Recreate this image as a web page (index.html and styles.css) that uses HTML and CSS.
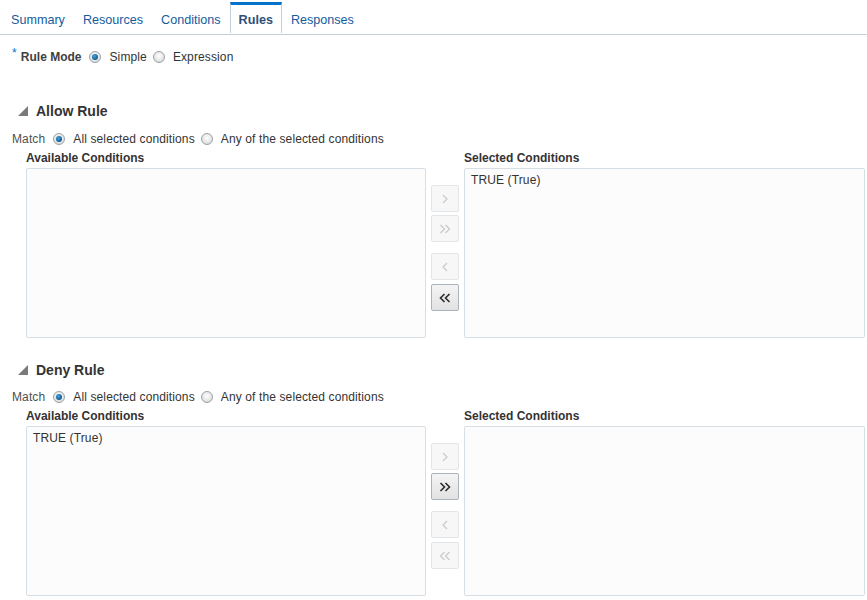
FILE: index.html
```html
<!DOCTYPE html>
<html>
<head>
<meta charset="utf-8">
<link rel="stylesheet" href="styles.css">
</head>
<body>
<div class="tabs">
  <div class="tab">Summary</div>
  <div class="tab">Resources</div>
  <div class="tab">Conditions</div>
  <div class="tab active">Rules</div>
  <div class="tab">Responses</div>
</div>

<div class="mode-row">
  <span class="req">*</span>
  <span class="mode-label">Rule Mode</span>
  <span class="radio on"></span><span class="opt">Simple</span>
  <span class="radio"></span><span class="opt">Expression</span>
</div>

<section class="rule allow">
  <h2 class="rule-head"><svg class="tri" width="10" height="10" viewBox="0 0 10 10"><polygon points="10,0 10,10 0,10" fill="#7a7a7a"/></svg>Allow Rule</h2>
  <div class="match-row">
    <span class="match-label">Match</span>
    <span class="radio on"></span><span class="opt">All selected conditions</span>
    <span class="radio"></span><span class="opt">Any of the selected conditions</span>
  </div>
  <div class="shuttle">
    <div class="col">
      <div class="col-label">Available Conditions</div>
      <div class="list"></div>
    </div>
    <div class="btns">
      <div class="btn dis"><svg width="10" height="10" viewBox="0 0 10 10"><polyline points="3,1 7,5 3,9" fill="none" stroke="currentColor" stroke-width="1.2"/></svg></div>
      <div class="btn dis"><svg width="12" height="10" viewBox="0 0 12 10"><polyline points="1.5,1 5.5,5 1.5,9" fill="none" stroke="currentColor" stroke-width="1.2"/><polyline points="6.5,1 10.5,5 6.5,9" fill="none" stroke="currentColor" stroke-width="1.2"/></svg></div>
      <div class="btn dis grp"><svg width="10" height="10" viewBox="0 0 10 10"><polyline points="7,1 3,5 7,9" fill="none" stroke="currentColor" stroke-width="1.2"/></svg></div>
      <div class="btn last"><svg width="12" height="10" viewBox="0 0 12 10"><polyline points="5.5,1 1.5,5 5.5,9" fill="none" stroke="currentColor" stroke-width="1.6"/><polyline points="10.5,1 6.5,5 10.5,9" fill="none" stroke="currentColor" stroke-width="1.6"/></svg></div>
    </div>
    <div class="col">
      <div class="col-label">Selected Conditions</div>
      <div class="list"><div class="item">TRUE (True)</div></div>
    </div>
  </div>
</section>

<section class="rule deny">
  <h2 class="rule-head"><svg class="tri" width="10" height="10" viewBox="0 0 10 10"><polygon points="10,0 10,10 0,10" fill="#7a7a7a"/></svg>Deny Rule</h2>
  <div class="match-row">
    <span class="match-label">Match</span>
    <span class="radio on"></span><span class="opt">All selected conditions</span>
    <span class="radio"></span><span class="opt">Any of the selected conditions</span>
  </div>
  <div class="shuttle">
    <div class="col">
      <div class="col-label">Available Conditions</div>
      <div class="list"><div class="item">TRUE (True)</div></div>
    </div>
    <div class="btns">
      <div class="btn dis"><svg width="10" height="10" viewBox="0 0 10 10"><polyline points="3,1 7,5 3,9" fill="none" stroke="currentColor" stroke-width="1.2"/></svg></div>
      <div class="btn"><svg width="12" height="10" viewBox="0 0 12 10"><polyline points="1.5,1 5.5,5 1.5,9" fill="none" stroke="currentColor" stroke-width="1.6"/><polyline points="6.5,1 10.5,5 6.5,9" fill="none" stroke="currentColor" stroke-width="1.6"/></svg></div>
      <div class="btn dis grp"><svg width="10" height="10" viewBox="0 0 10 10"><polyline points="7,1 3,5 7,9" fill="none" stroke="currentColor" stroke-width="1.2"/></svg></div>
      <div class="btn dis last"><svg width="12" height="10" viewBox="0 0 12 10"><polyline points="5.5,1 1.5,5 5.5,9" fill="none" stroke="currentColor" stroke-width="1.2"/><polyline points="10.5,1 6.5,5 10.5,9" fill="none" stroke="currentColor" stroke-width="1.2"/></svg></div>
    </div>
    <div class="col">
      <div class="col-label">Selected Conditions</div>
      <div class="list"></div>
    </div>
  </div>
</section>
</body>
</html>
```

FILE: styles.css
```css
html, body {
  margin: 0;
  padding: 0;
  background: #ffffff;
  font-family: "Liberation Sans", Arial, sans-serif;
  font-size: 12px;
  letter-spacing: 0.12px;
  color: #333333;
}

.tabs {
  display: flex;
  padding-left: 2px;
  border-bottom: 1px solid #c4ced7;
  height: 35px;
  box-sizing: border-box;
}
.tab {
  padding: 0 8px;
  border: 1px solid transparent;
  border-top: 3px solid transparent;
  border-bottom: none;
  margin-top: 2px;
  line-height: 30px;
  font-size: 12.6px;
  letter-spacing: 0;
  color: #145c9e;
}
.tab.active {
  border-color: #c4ced7;
  border-top-color: #0572ce;
  font-weight: bold;
  color: #2f4f78;
  background: #ffffff;
  height: 31px;
  margin-bottom: -1px;
  box-sizing: border-box;
}

.mode-row {
  display: flex;
  align-items: center;
  height: 16px;
  margin-top: 14px;
  padding-left: 12px;
}
.req {
  color: #0572ce;
  font-size: 12px;
  align-self: flex-start;
  margin-top: -3px;
  margin-right: 4px;
}
.mode-label {
  font-weight: bold;
  color: #404040;
  letter-spacing: 0;
  margin-right: 8px;
}

.radio {
  display: inline-block;
  flex: none;
  width: 12px;
  height: 12px;
  box-sizing: border-box;
  border-radius: 50%;
  border: 1px solid #9aa3ab;
  background: radial-gradient(circle at 50% 40%, #ffffff 0%, #e4e4e4 60%, #cfcfcf 100%);
  position: relative;
  margin-right: 8px;
}
.radio.on::after {
  content: "";
  position: absolute;
  left: 2px;
  top: 2px;
  width: 6px;
  height: 6px;
  border-radius: 50%;
  background: radial-gradient(circle at 40% 35%, #4aa0d8 0%, #0b5d95 70%, #0a4a75 100%);
}
.opt {
  color: #333333;
  margin-right: 6px;
}

.rule-head {
  display: flex;
  align-items: center;
  margin: 0;
  font-size: 14px;
  font-weight: bold;
  letter-spacing: 0;
  color: #333333;
  height: 18px;
  padding-left: 18px;
}
.tri {
  margin-right: 8px;
}
.allow .rule-head { margin-top: 37px; }
.deny .rule-head { margin-top: 23px; }

.match-row {
  display: flex;
  align-items: center;
  height: 16px;
  margin-top: 11px;
  padding-left: 12px;
}
.deny .match-row { margin-top: 10px; }
.match-label {
  color: #4f4f4f;
  margin-right: 8px;
}

.shuttle {
  display: flex;
  gap: 5px;
  padding-left: 26px;
  margin-top: 4px;
}
.col {
  display: flex;
  flex-direction: column;
}
.col:first-child { width: 400px; }
.col:last-child { width: 401px; }
.col-label {
  font-weight: bold;
  letter-spacing: 0;
  color: #333333;
  height: 14px;
  line-height: 14px;
  margin-bottom: 3px;
}
.list {
  height: 170px;
  box-sizing: border-box;
  border: 1px solid #d6dfe6;
  border-radius: 2px;
  background: #fcfcfc;
  padding: 5px 6px;
}
.item {
  line-height: 13px;
  color: #333333;
}

.btns {
  width: 28px;
  display: flex;
  flex-direction: column;
  gap: 3px;
  padding-top: 34px;
}
.btn {
  height: 27px;
  box-sizing: border-box;
  border: 1px solid #a8b3bd;
  border-radius: 2px;
  background: linear-gradient(#f4f4f4, #e2e2e2);
  color: #2b2b2b;
  display: flex;
  align-items: center;
  justify-content: center;
}
.btn.dis {
  border-color: #e3e6e8;
  background: #f7f7f7;
  color: #c9c9c9;
}
.btn.grp {
  margin-top: 8px;
}
.btn.last {
  margin-top: 1px;
}
```
